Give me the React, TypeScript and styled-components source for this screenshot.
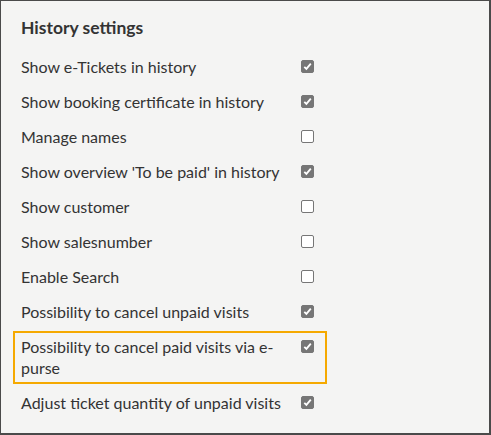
import React from "react";
import styled, { createGlobalStyle } from "styled-components";

type Setting = {
  label: string;
  checked: boolean;
  focused?: boolean;
};

const settings: Setting[] = [
  { label: "Show e-Tickets in history", checked: true },
  { label: "Show booking certificate in history", checked: true },
  { label: "Manage names", checked: false },
  { label: "Show overview 'To be paid' in history", checked: true },
  { label: "Show customer", checked: false },
  { label: "Show salesnumber", checked: false },
  { label: "Enable Search", checked: false },
  { label: "Possibility to cancel unpaid visits", checked: true },
  { label: "Possibility to cancel paid visits via e-purse", checked: true, focused: true },
  { label: "Adjust ticket quantity of unpaid visits", checked: true },
];

const GlobalStyle = createGlobalStyle`
  html, body {
    margin: 0;
    padding: 0;
    background: #f4f4f3;
  }
  * {
    box-sizing: border-box;
  }
`;

const Panel = styled.section`
  width: 491px;
  height: 435px;
  background: #f4f4f3;
  border-style: solid;
  border-color: #4a4a4a;
  border-width: 1px 2px 2px 1px;
  padding: 16px 12px 0;
  font-family: Lato, "Open Sans", sans-serif;
  color: #333;
`;

const Title = styled.h2`
  margin: 0 0 12px;
  padding-left: 8px;
  font-size: 17.5px;
  line-height: 22px;
  font-weight: 700;
  color: #333;
`;

const Row = styled.label<{ $focused?: boolean }>`
  display: flex;
  align-items: flex-start;
  width: 314px;
  margin: 0 0 3px;
  padding: 3px 6px 4px;
  border: 2px solid ${(p) => (p.$focused ? "#f5a900" : "transparent")};
  font-size: 16px;
  line-height: 21px;
`;

const Label = styled.span`
  flex: 0 0 272px;
  margin-right: 8px;
`;

const Box = styled.span<{ $checked: boolean }>`
  flex: 0 0 13px;
  width: 13px;
  height: 13px;
  margin-top: 4px;
  border-radius: 2px;
  display: flex;
  align-items: center;
  justify-content: center;
  background: ${(p) => (p.$checked ? "#767676" : "#fff")};
  border: 1px solid #767676;
`;

const Check = () => (
  <svg width="9" height="9" viewBox="0 0 9 9">
    <path d="M1.3 4.8 L3.4 6.9 L7.8 1.6" fill="none" stroke="#fff" strokeWidth="1.8" />
  </svg>
);

export default function App() {
  return (
    <>
      <GlobalStyle />
      <Panel>
        <Title>History settings</Title>
        {settings.map((s) => (
          <Row key={s.label} $focused={s.focused}>
            <Label>{s.label}</Label>
            <Box $checked={s.checked}>{s.checked && <Check />}</Box>
          </Row>
        ))}
      </Panel>
    </>
  );
}
